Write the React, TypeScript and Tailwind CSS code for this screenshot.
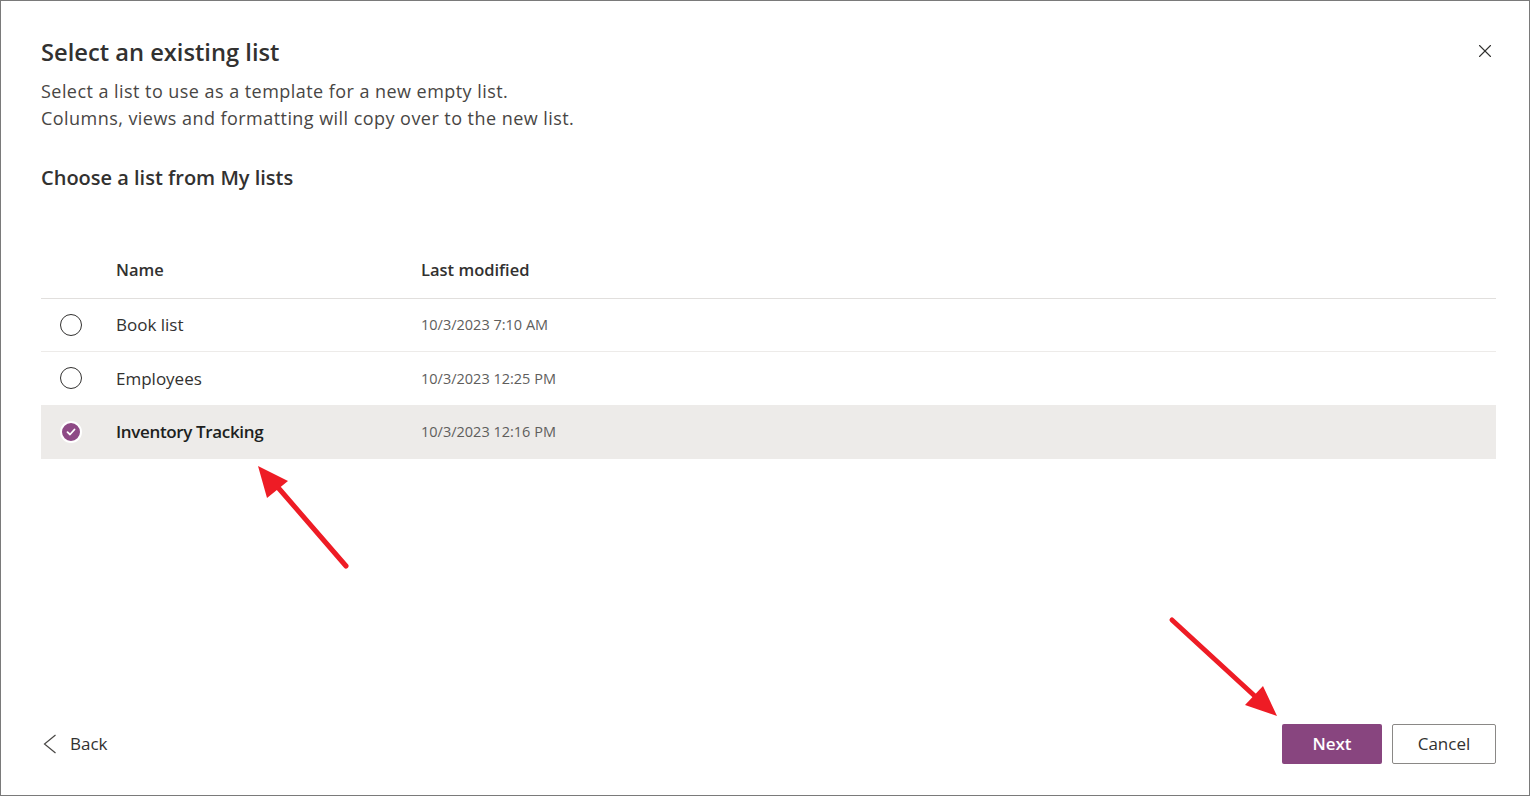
import { X } from "lucide-react";

const rows = [
  { name: "Book list", modified: "10/3/2023 7:10 AM", selected: false },
  { name: "Employees", modified: "10/3/2023 12:25 PM", selected: false },
  { name: "Inventory Tracking", modified: "10/3/2023 12:16 PM", selected: true },
];

function Radio({ checked }: { checked: boolean }) {
  if (checked) {
    return (
      <div className="w-[22px] h-[22px] rounded-full bg-[#8e4a86] border-2 border-white flex items-center justify-center">
        <svg width="10" height="10" viewBox="0 0 10 10">
          <path d="M1.5 5.2 L4 7.5 L8.5 2.5" fill="none" stroke="white" strokeWidth="1.8" strokeLinecap="round" strokeLinejoin="round" />
        </svg>
      </div>
    );
  }
  return <div className="w-[22px] h-[22px] rounded-full border border-[#323130]" />;
}

export default function App() {
  return (
    <div
      className="relative w-[1530px] h-[796px] bg-white border border-[#7a7a7a] flex flex-col text-[#323130]"
      style={{ fontFamily: '"Open Sans", "Noto Sans", sans-serif' }}
    >
      {/* Header */}
      <div className="pt-[35px] px-[40px]">
        <h1 className="text-[23.7px] leading-[32px] font-semibold">Select an existing list</h1>
        <p className="mt-[10px] text-[18px] leading-[27px] tracking-[0.45px] text-[#484644]">
          Select a list to use as a template for a new empty list.
          <br />
          Columns, views and formatting will copy over to the new list.
        </p>
        <h2 className="mt-[32px] text-[20px] leading-[28px] font-semibold">Choose a list from My lists</h2>
      </div>

      <button className="absolute top-[39px] right-[33px] text-[#323130]">
        <X size={22} strokeWidth={1.2} />
      </button>

      {/* Table */}
      <div className="mt-[51px] ml-[40px] mr-[33px]">
        <div className="h-[56px] flex items-center border-b border-[#e1dfdd] text-[16.5px] font-semibold">
          <div className="w-[75px]" />
          <div className="w-[305px]">Name</div>
          <div>Last modified</div>
        </div>
        {rows.map((r) => (
          <div
            key={r.name}
            className={`h-[53.3px] flex items-center border-b ${
              r.selected ? "bg-[#edebe9] border-[#edebe9]" : "border-[#edebe9]"
            }`}
          >
            <div className="w-[75px] pl-[19px]">
              <Radio checked={r.selected} />
            </div>
            <div
              className={`w-[305px] text-[17px] ${
                r.selected ? "font-semibold tracking-[-0.35px] text-[#201f1e]" : ""
              }`}
            >
              {r.name}
            </div>
            <div className="text-[14.5px] text-[#605e5c]">{r.modified}</div>
          </div>
        ))}
      </div>

      {/* Footer */}
      <div className="mt-auto pb-[31px] pl-[42px] pr-[33px] flex items-center">
        <button className="flex items-center gap-[13px] text-[17px] text-[#323130]">
          <svg width="14" height="20" viewBox="0 0 14 20">
            <polyline points="12.5,1 1.5,10 12.5,19" fill="none" stroke="#484644" strokeWidth="1.2" />
          </svg>
          <span>Back</span>
        </button>
        <div className="ml-auto flex gap-[10px]">
          <button className="w-[100px] h-[40px] rounded-[2px] bg-[#88457f] text-white text-[17px] font-semibold">
            Next
          </button>
          <button className="w-[104px] h-[40px] rounded-[2px] border border-[#8a8886] bg-white text-[17px] font-medium">
            Cancel
          </button>
        </div>
      </div>

      {/* Annotation arrows */}
      <svg className="absolute -left-px -top-px pointer-events-none" width="1530" height="796">
        <line x1="346" y1="566" x2="275" y2="484" stroke="#ee1c25" strokeWidth="5" strokeLinecap="round" />
        <polygon points="258,466 267,498 288,481" fill="#ee1c25" />
        <line x1="1172" y1="620" x2="1258" y2="699" stroke="#ee1c25" strokeWidth="5" strokeLinecap="round" />
        <polygon points="1277,716 1245,705 1263,686" fill="#ee1c25" />
      </svg>
    </div>
  );
}
